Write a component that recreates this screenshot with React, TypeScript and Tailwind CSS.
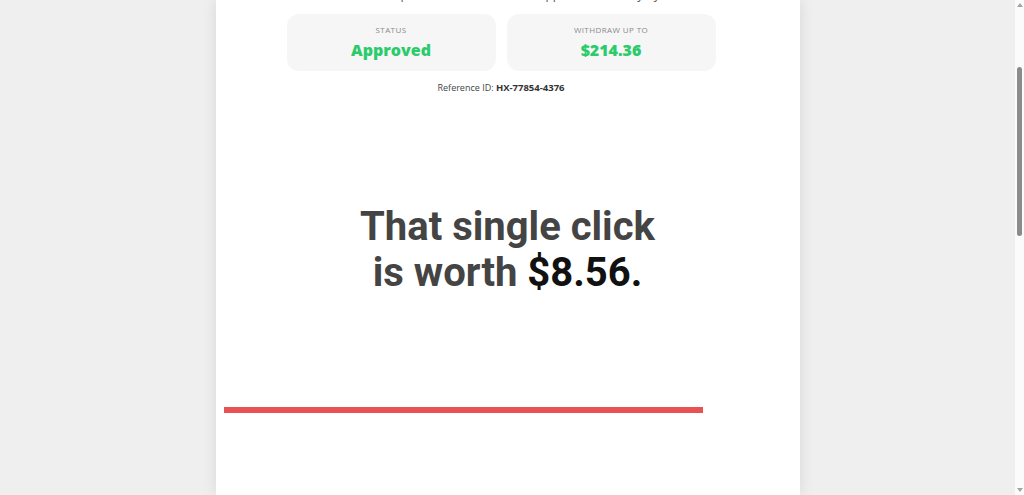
import React from "react";

const Stat = ({ label, value }: { label: string; value: string }) => (
  <div className="flex h-[57px] flex-col items-center rounded-[12px] bg-[#f6f6f6] pt-[10px]">
    <p className="text-[8px] uppercase leading-[12px] tracking-[0.05em] text-[#8a8a8a]">
      {label}
    </p>
    <p className="mt-[3px] text-[16px] font-extrabold leading-[22px] text-[#2bcb6b]">
      {value}
    </p>
  </div>
);

const Scrollbar = () => (
  <div className="flex w-[9px] flex-col items-center bg-[#fbfbfb] py-[3px]">
    <div className="h-0 w-0 border-x-[3px] border-b-[4px] border-x-transparent border-b-[#a3a3a3]" />
    <div className="mt-[60px] h-[169px] w-[5px] rounded-full bg-[#8b8b8b]" />
    <div className="flex-1" />
    <div className="h-0 w-0 border-x-[3px] border-t-[4px] border-x-transparent border-t-[#a3a3a3]" />
  </div>
);

export default function App() {
  return (
    <div
      className="flex h-[495px] overflow-hidden bg-[#efefef]"
      style={{ fontFamily: '"Open Sans", "Noto Sans", sans-serif' }}
    >
      <div className="flex flex-1 justify-center">
        <div className="flex w-[584px] flex-col bg-white px-2 shadow-[0_0_14px_rgba(0,0,0,0.10)]">
          <p className="-mt-[14px] text-center text-[12px] leading-[18px] text-[#555]">
            Your request has been reviewed approved instantly by
          </p>

          <div className="ml-[63px] mt-[10px] grid w-[429px] grid-cols-2 gap-[11px]">
            <Stat label="Status" value="Approved" />
            <Stat label="Withdraw up to" value="$214.36" />
          </div>

          <p className="ml-[63px] mt-[10px] w-[429px] text-center text-[9px] leading-[14px] text-[#444]">
            Reference ID: <span className="text-[9.5px] font-bold text-[#333]">HX-77854-4376</span>
          </p>

          <h1
            className="mt-[109px] text-center text-[40px] font-bold leading-[46px] text-[#444]"
            style={{ fontFamily: "Roboto, sans-serif" }}
          >
            That single click
            <br />
            is worth <span className="text-[#111]">$8.56.</span>
          </h1>

          <div className="mt-[111px] h-[6px] w-[479px] bg-[#e85252]" />
        </div>
      </div>
      <Scrollbar />
    </div>
  );
}
